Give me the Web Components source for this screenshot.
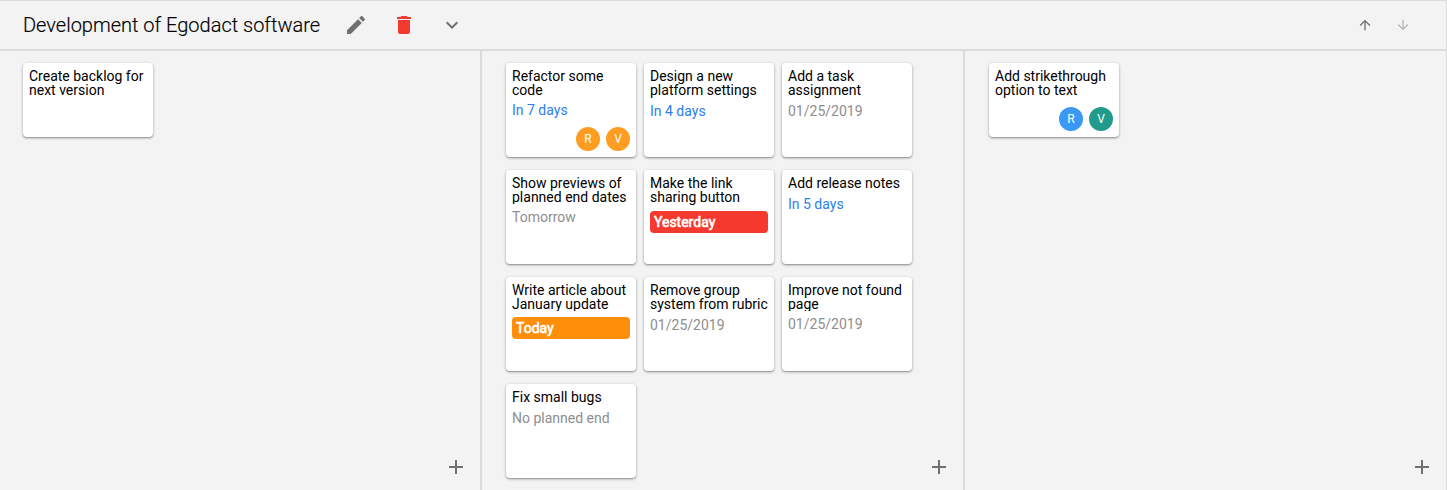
<!DOCTYPE html>
<html lang="en">
<head>
<meta charset="utf-8">
<title>Development of Egodact software</title>
<style>
html, body { margin: 0; height: 100%; }
body { font-family: Roboto, "Liberation Sans", sans-serif; background: #f3f3f3; color: #000; overflow: hidden; }
</style>
</head>
<body>
<kanban-board>
  <board-header slot="header">Development of Egodact software</board-header>
  <board-column style="--inset:23px">
    <task-card small>Create backlog for<br>next version</task-card>
  </board-column>
  <board-column>
    <task-card date="In 7 days" kind="soon" tight>Refactor some<br>code<user-avatar slot="users">R</user-avatar><user-avatar slot="users">V</user-avatar></task-card>
    <task-card date="In 4 days" kind="soon">Design a new<br>platform settings</task-card>
    <task-card date="01/25/2019">Add a task<br>assignment</task-card>
    <task-card date="Tomorrow" tight>Show previews of<br>planned end dates</task-card>
    <task-card date="Yesterday" kind="late">Make the link<br>sharing button</task-card>
    <task-card date="In 5 days" kind="soon">Add release notes</task-card>
    <task-card date="Today" kind="today" tight>Write article about<br>January update</task-card>
    <task-card date="01/25/2019">Remove group<br>system from rubric</task-card>
    <task-card date="01/25/2019" tight>Improve not found<br>page</task-card>
    <task-card date="No planned end">Fix small bugs</task-card>
  </board-column>
  <board-column>
    <task-card small>Add strikethrough<br>option to text<user-avatar slot="users" style="--c:#3a99f4">R</user-avatar><user-avatar slot="users" style="--c:#219c8c">V</user-avatar></task-card>
  </board-column>
</kanban-board>
<script>
const ICONS = {
  edit: 'M3 17.25V21h3.75L17.81 9.94l-3.75-3.75L3 17.25zM20.71 7.04c.39-.39.39-1.02 0-1.41l-2.34-2.34c-.39-.39-1.02-.39-1.41 0l-1.83 1.83 3.75 3.75 1.83-1.83z',
  delete: 'M6 19c0 1.1.9 2 2 2h8c1.1 0 2-.9 2-2V7H6v12zM19 4h-3.5l-1-1h-5l-1 1H5v2h14V4z',
  expand: 'M16.59 8.59L12 13.17 7.41 8.59 6 10l6 6 6-6z',
  up: 'M4 12l1.41 1.41L11 7.83V20h2V7.83l5.58 5.59L20 12l-8-8-8 8z',
  down: 'M20 12l-1.41-1.41L13 16.17V4h-2v12.17l-5.58-5.59L4 12l8 8 8-8z',
  add: 'M19 13h-6v6h-2v-6H5v-2h6V5h2v6h6v2z'
};

function define(name, html, setup) {
  const template = document.createElement('template');
  template.innerHTML = html;
  customElements.define(name, class extends HTMLElement {
    constructor() {
      super();
      this.attachShadow({ mode: 'open' }).append(template.content.cloneNode(true));
    }
    connectedCallback() { if (setup) setup(this, this.shadowRoot); }
  });
}

define('md-icon', `
<style>
:host { display: block; flex: none; width: var(--size, 24px); height: var(--size, 24px); color: #707070; }
svg { display: block; width: 100%; height: 100%; fill: currentColor; }
</style>
<svg viewBox="0 0 24 24"><path/></svg>`,
(host, root) => root.querySelector('path').setAttribute('d', ICONS[host.getAttribute('name')]));

define('user-avatar', `
<style>
:host { display: flex; align-items: center; justify-content: center; width: 24px; height: 24px; border-radius: 50%; background: var(--c, #ff9c22); color: #fff; font-size: 12px; line-height: 24px; }
</style>
<slot></slot>`);

define('task-card', `
<style>
:host { box-sizing: border-box; display: flex; flex-direction: column; height: 94px; padding: 6px; background: #fff; border-radius: 4px; box-shadow: 0 1px 3px rgba(0,0,0,.35), 0 1px 1px rgba(0,0,0,.15); font-size: 14px; line-height: 14px; white-space: nowrap; }
:host([small]) { height: 74px; }
:host([tight]) .title { overflow: hidden; }
.date { margin-top: 6px; color: #8e8e8e; line-height: 16px; }
:host([tight]) .date { margin-top: 5px; }
.date:empty { display: none; }
:host([kind="soon"]) .date { color: #2b80f0; }
:host([kind="late"]) .date, :host([kind="today"]) .date { height: 22px; line-height: 22px; padding: 0 4px; border-radius: 4px; color: #fff; -webkit-text-stroke: .6px #fff; }
:host([kind="late"]) .date { margin-top: 7px; background: #f4392f; }
:host([kind="today"]) .date { margin-top: 6px; background: #ff8f0a; }
.users { display: flex; justify-content: flex-end; gap: 6px; margin-top: auto; }
</style>
<div class="title"><slot></slot></div>
<div class="date"></div>
<div class="users"><slot name="users"></slot></div>`,
(host, root) => { root.querySelector('.date').textContent = host.getAttribute('date') || ''; });

define('board-column', `
<style>
:host { box-sizing: border-box; display: flex; flex-direction: column; justify-content: space-between; padding: 12px 12px 11px var(--inset, 24px); border-right: 2px solid #dbdbdb; }
:host(:last-child) { border-right-width: 1px; }
.cards { display: grid; grid-template-columns: repeat(3, 130px); gap: 13px 8px; height: 0; align-content: start; }
md-icon { align-self: flex-end; }
</style>
<div class="cards"><slot></slot></div>
<md-icon name="add"></md-icon>`);

define('board-header', `
<style>
:host { box-sizing: border-box; display: flex; align-items: center; height: 51px; padding: 0 35px 0 23px; border: solid #dbdbdb; border-width: 1px 1px 2px 0; }
.name { width: 297px; font-size: 20px; line-height: 24px; font-weight: 300; -webkit-text-stroke: .15px #000; white-space: nowrap; }
.tools { display: flex; gap: 24px; margin-left: 24px; flex: 1; }
.order { display: flex; gap: 22px; }
.order md-icon { --size: 16px; }
.delete { color: #f4392f; }
.off { opacity: .45; }
</style>
<div class="name"><slot></slot></div>
<div class="tools"><md-icon name="edit"></md-icon><md-icon class="delete" name="delete"></md-icon><md-icon name="expand"></md-icon></div>
<div class="order"><md-icon name="up"></md-icon><md-icon class="off" name="down"></md-icon></div>`);

define('kanban-board', `
<style>
:host { display: flex; flex-direction: column; height: 100vh; }
.columns { flex: 1; min-height: 0; display: grid; grid-template-columns: 482px 483px 1fr; }
</style>
<slot name="header"></slot>
<div class="columns"><slot></slot></div>`);
</script>
</body>
</html>
